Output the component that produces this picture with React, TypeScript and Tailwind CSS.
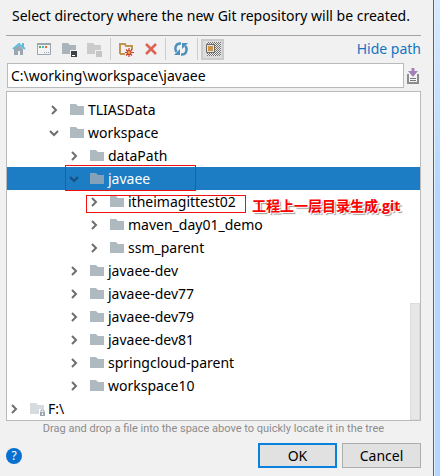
import type { ReactNode } from "react";

type Entry = {
  name: string;
  level: 0 | 2 | 3 | 4;
  open?: boolean;
  selected?: boolean;
  locked?: boolean;
  marked?: boolean;
};

const entries: Entry[] = [
  { name: "TLIASData", level: 2 },
  { name: "workspace", level: 2, open: true },
  { name: "dataPath", level: 3 },
  { name: "javaee", level: 3, open: true, selected: true },
  { name: "itheimagittest02", level: 4, marked: true },
  { name: "maven_day01_demo", level: 4 },
  { name: "ssm_parent", level: 4 },
  { name: "javaee-dev", level: 3 },
  { name: "javaee-dev77", level: 3 },
  { name: "javaee-dev79", level: 3 },
  { name: "javaee-dev81", level: 3 },
  { name: "springcloud-parent", level: 3 },
  { name: "workspace10", level: 3 },
  { name: "F:\\", level: 0, locked: true },
];

const indent = { 0: "pl-0", 2: "pl-10", 3: "pl-[60px]", 4: "pl-20" };

function Chevron({ open, selected }: { open?: boolean; selected?: boolean }) {
  return (
    <svg className="size-4" viewBox="0 0 16 16" fill="none" stroke={selected ? "#17507e" : "#6e6e6e"} strokeWidth="2">
      {open ? <path d="M3 6l4 4 4-4" /> : <path d="M5 4l4 4-4 4" />}
    </svg>
  );
}

function Folder({ locked, selected }: { locked?: boolean; selected?: boolean }) {
  return (
    <svg className="size-4" viewBox="0 0 16 16">
      <path d="M0 2h6l2 2h6v9H0z" fill={locked ? "#d6dbdf" : selected ? "#83a2b9" : "#aeb9c0"} />
      {locked && (
        <>
          <path d="M9 8h7v8H9z" fill="#fff" />
          <path d="M10 11h5v4h-5z" fill="#9aa7b0" />
          <path d="M11 11V9h3v2" fill="none" stroke="#9aa7b0" />
          <path d="M12 12h1v2h-1z" fill="#fff" />
        </>
      )}
    </svg>
  );
}

function Row({ entry }: { entry: Entry }) {
  const { name, level, open, selected, locked, marked } = entry;
  return (
    <li
      role="treeitem"
      aria-selected={!!selected}
      aria-expanded={!!open}
      className={`relative flex h-[23px] items-center ${indent[level]} ${selected ? "bg-[#1c7cc4] text-white" : ""}`}
    >
      <button type="button" aria-label={`Toggle ${name}`} className="mr-[7px] flex w-4 shrink-0">
        <Chevron open={open} selected={selected} />
      </button>
      <Folder locked={locked} selected={selected} />
      <span className="ml-0.5 whitespace-nowrap">{name}</span>
      {selected && <span className="absolute -top-0.5 left-[58px] h-[26px] w-[131px] border border-[#f01010]" />}
      {marked && (
        <>
          <span className="absolute top-[5px] left-[79px] h-[18px] w-[160px] border border-[#f01010]" />
          <span className="absolute top-1.5 left-[245px] font-['Open_Sans','Noto_Sans_CJK_SC',sans-serif] text-sm leading-5 font-bold whitespace-nowrap text-[#ff0000] [text-shadow:1px_1px_0_#fff,2px_2px_1px_#999]">
            工程上一层目录生成.git
          </span>
        </>
      )}
    </li>
  );
}

function Tool({ label, children, pressed }: { label: string; children: ReactNode; pressed?: boolean }) {
  return (
    <button
      type="button"
      aria-label={label}
      title={label}
      className={`flex h-[21px] shrink-0 items-center justify-center ${pressed ? "w-[23px] border-2 border-[#cbcbcb] bg-[#dcdcdc]" : "w-[25px]"}`}
    >
      <svg className="size-4 shrink-0" viewBox="0 0 16 16">
        {children}
      </svg>
    </button>
  );
}

function Divider() {
  return <span className="h-[22px] w-px shrink-0 bg-[#cdcdcd]" />;
}

function Toolbar() {
  return (
    <div className="flex h-[27px] items-center border-t border-[#a3a3a3]">
      <Tool label="Home">
        <path d="M3 8l5-4 4 4v6H9v-4H7v4H3z" fill="#9aa7b0" />
        <path d="M2 8l6-5 6 5M12 2v4" fill="none" stroke="#62bce0" strokeWidth="2" />
      </Tool>
      <Tool label="Desktop">
        <path d="M1.500 2.500h13v11h-13z" fill="#f3f3f3" stroke="#9aa7b0" />
        <path d="M1 2h14v2H1z" fill="#9aa7b0" />
        <path d="M3 5h2v2H3z" fill="#59b653" />
        <path d="M6 5h2v2H6z" fill="#40b6e0" />
        <path d="M9 5h2v2H9z" fill="#f26522" />
        <path d="M8 11h1v1H8zM10 11h1v1h-1zM12 11h1v1h-1z" fill="#9aa7b0" />
      </Tool>
      <Tool label="Project directory">
        <path d="M1 2h6l2 2h6v5H9v4H1z" fill="#a9b4bb" />
        <path d="M10 10h6v6h-6z" fill="#3e4245" />
        <path d="M11 14h3v1h-3z" fill="#fff" />
      </Tool>
      <Tool label="Module directory">
        <path d="M1 2h6l2 2h6v5H9v4H1z" fill="#cbcbcb" />
        <path d="M10 10h6v6h-6z" fill="#c5c5c5" />
      </Tool>
      <span className="w-1 shrink-0" />
      <Divider />
      <span className="w-0.5 shrink-0" />
      <Tool label="New folder">
        <path d="M2 13V3h5l1 2h6v4M2 13h5" fill="none" stroke="#c39451" strokeWidth="2" />
        <path d="M11 7v9M7 11.500h9M8 8.500l6 6M14 8.500l-6 6" stroke="#c83e2e" strokeWidth="1.2" />
        <circle cx="11" cy="11.500" r="2" fill="#eea64d" stroke="#c83e2e" />
      </Tool>
      <Tool label="Delete">
        <path d="M3 3l10 10M13 3L3 13" fill="none" stroke="#df6355" strokeWidth="2.6" />
      </Tool>
      <span className="w-0.5 shrink-0" />
      <Divider />
      <span className="w-0.5 shrink-0" />
      <Tool label="Refresh">
        <path d="M8 2.500C3 2 1 7 3.500 11M8 13.500c5 .5 7-4.500 4.500-8.500" fill="none" stroke="#4c91bd" strokeWidth="2.4" />
        <path d="M1 14h6V8zM15 2H9v6z" fill="#4c91bd" />
      </Tool>
      <span className="w-1 shrink-0" />
      <Divider />
      <span className="w-[3px] shrink-0" />
      <Tool label="Show hidden files" pressed>
        <defs>
          <pattern id="checker" width="2" height="2" patternUnits="userSpaceOnUse">
            <path d="M0 0h1v1H0zM1 1h1v1H1z" fill="#707070" shapeRendering="crispEdges" />
          </pattern>
        </defs>
        <path d="M2 1h14v14H2z" fill="#ececec" />
        <path d="M2 1h14v14H2z" fill="url(#checker)" />
        <path d="M1.500 3.500h8v8h-8z" fill="#e3e3e3" stroke="#6d6d6d" />
        <path d="M3 5h5v5H3z" fill="#ce9546" />
      </Tool>
      <a href="#path" className="ml-auto whitespace-nowrap text-[#1474c4]">
        Hide path
      </a>
    </div>
  );
}

export default function App() {
  return (
    <div className="flex min-h-screen bg-[#f1f1f1] font-['Noto_Sans','Noto_Sans_CJK_SC',sans-serif] text-sm leading-5 text-black">
      <main className="flex min-w-0 flex-1 flex-col pr-3 pl-1.5">
        <h1 className="h-[35px] pt-1.5 pl-1.5 whitespace-nowrap">
          Select directory where the new Git repository will be created.
        </h1>
        <Toolbar />
        <div className="mt-px flex items-center">
          <input
            aria-label="Path"
            defaultValue="C:\working\workspace\javaee"
            className="ml-px h-[25px] min-w-0 flex-1 border border-[#bababa] bg-white px-[3px] outline-none"
          />
          <button type="button" aria-label="Path history" className="flex w-[17px] justify-center">
            <svg className="h-4 w-3" viewBox="0 0 12 16">
              <path d="M0 6h2v7h8V6h2v10H0z" fill="#8c8c8c" />
              <path d="M2 6h8v8H2z" fill="#f4f4f4" />
              <path d="M3 10h6v1H3zM3 12h6v1H3z" fill="#777" />
              <path d="M4.500 0h3v3H11L6 9 1 3h3.500z" fill="#a580ba" />
            </svg>
          </button>
        </div>
        <div className="relative mt-[3px] border border-[#bababa] bg-white pt-1.5">
          <ul role="tree" aria-label="Directories">
            {entries.map((entry) => (
              <Row key={entry.name} entry={entry} />
            ))}
          </ul>
          <span className="absolute right-0 bottom-0 h-[117px] w-2.5 border border-[#dcdcdc] bg-[#e7e7e7]" />
        </div>
        <p className="text-center font-['Roboto',sans-serif] text-[11px] leading-4 whitespace-nowrap text-[#8c8c8c]">
          Drag and drop a file into the space above to quickly locate it in the tree
        </p>
        <div className="mt-1.5 flex items-center gap-[5px]">
          <button
            type="button"
            aria-label="Help"
            className="mr-auto flex size-4 items-center justify-center rounded-full bg-[#0870d0] text-xs leading-4 text-white"
          >
            ?
          </button>
          <button type="button" className="h-[25px] w-[79px] border-2 border-[#0a82dc] bg-[#e1e1e1] leading-5">
            OK
          </button>
          <button type="button" className="h-[25px] w-[79px] border border-[#adadad] bg-[#e1e1e1] leading-5">
            Cancel
          </button>
        </div>
      </main>
      <div className="w-[7px] shrink-0 border-l border-[#55656f] bg-linear-to-b from-[#d6eaff] to-[#b3d7ff] to-40% shadow-[inset_1px_0_0_#e4f0fb]" />
    </div>
  );
}
